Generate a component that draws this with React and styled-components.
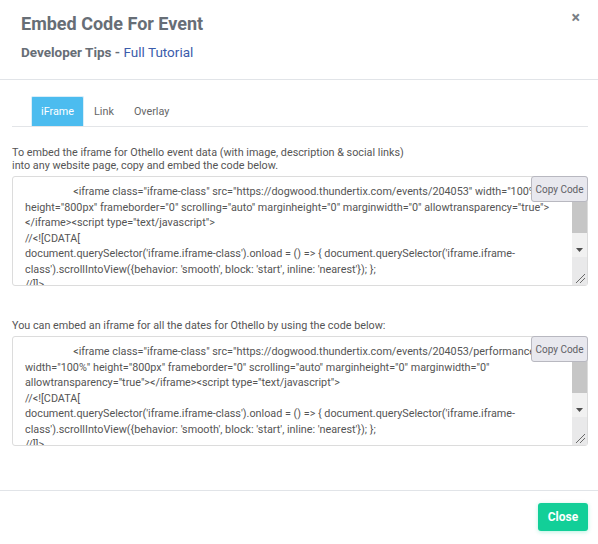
import styled, { createGlobalStyle } from "styled-components";

const GlobalStyle = createGlobalStyle`
  html, body {
    margin: 0;
    padding: 0;
    background: #fff;
  }
  body {
    font-family: Roboto, "Liberation Sans", sans-serif;
  }
`;

const indent = '                  ';

const script = `
//<![CDATA[
document.querySelector('iframe.iframe-class').onload = () => { document.querySelector('iframe.iframe-class').scrollIntoView({behavior: 'smooth', block: 'start', inline: 'nearest'}); };
//]]>
</script>`;

const eventCode = `${indent}<iframe class="iframe-class" src="https://dogwood.thundertix.com/events/204053" width="100%" height="800px" frameborder="0" scrolling="auto" marginheight="0" marginwidth="0" allowtransparency="true"></iframe><script type="text/javascript">${script}`;

const datesCode = `${indent}<iframe class="iframe-class" src="https://dogwood.thundertix.com/events/204053/performances" width="100%" height="800px" frameborder="0" scrolling="auto" marginheight="0" marginwidth="0" allowtransparency="true"></iframe><script type="text/javascript">${script}`;

const tabs = ['iFrame', 'Link', 'Overlay'];

// the page is shot with scrollbars hidden, so the textarea's bar is drawn on top
const FakeScrollbar = () => {
  return (
    <Scrollbar aria-hidden='true'>
      <ScrollButton />
      <Thumb />
      <TrackRest />
      <ScrollButton>
        <svg width='7' height='4' viewBox='0 0 7 4'>
          <path d='M0 0h7L3.5 4z' fill='#505050' />
        </svg>
      </ScrollButton>
      <Corner>
        <svg width='11' height='11' viewBox='0 0 11 11'>
          <path d='M1 10L10 1M5 10L10 5' stroke='#6a6a6a' strokeWidth='1' />
        </svg>
      </Corner>
    </Scrollbar>
  );
}

const CodeBlock = ({ label, code }) => {
  return (
    <Section>
      <Label>{ label }</Label>
      <CodeWrap>
        <CodeArea readOnly defaultValue={ code } />
        <FakeScrollbar />
        <CopyButton>Copy Code</CopyButton>
      </CodeWrap>
    </Section>
  );
}

const App = () => {
  return (
    <>
      <GlobalStyle />
      <Modal>
        <Header>
          <div>
            <Title>Embed Code For Event</Title>
            <Subtitle>
              Developer Tips - <a href="#">Full Tutorial</a>
            </Subtitle>
          </div>
          <CloseX>×</CloseX>
        </Header>

        <Body>
          <TabBar>
            {
              tabs.map((tab, index) => (
                <Tab key={tab} active={ index === 0 }>{ tab }</Tab>
              ))
            }
          </TabBar>

          <CodeBlock
            label={<>To embed the iframe for Othello event data (with image, description &amp; social links)<br />into any website page, copy and embed the code below.</>}
            code={ eventCode }
          />
          <CodeBlock
            label='You can embed an iframe for all the dates for Othello by using the code below:'
            code={ datesCode }
          />
        </Body>

        <Footer>
          <CloseButton>Close</CloseButton>
        </Footer>
      </Modal>
    </>
  );
}

const Modal = styled.div`
  width: 598px;
  height: 544px;
  display: flex;
  flex-direction: column;
  background: #fff;
`;

const Header = styled.div`
  height: 80px;
  box-sizing: border-box;
  padding: 13px 18px 0 21px;
  display: flex;
  justify-content: space-between;
  align-items: flex-start;
  border-bottom: 1px solid #e1e4e8;
`;

const Title = styled.h1`
  margin: 0;
  font-size: 18px;
  font-weight: 700;
  line-height: 22px;
  color: #676e76;
`;

const Subtitle = styled.div`
  margin-top: 8px;
  font-size: 13.5px;
  font-weight: 700;
  line-height: 18px;
  color: #676e76;

  a {
    font-weight: 400;
    color: #3b5cab;
    text-decoration: none;
  }
`;

const CloseX = styled.span`
  margin-top: -1px;
  font-size: 16px;
  font-weight: 700;
  line-height: 12px;
  color: #7a7f86;
  cursor: pointer;
`;

const Body = styled.div`
  flex: 1;
  padding: 16px 10px 0 12px;
`;

const TabBar = styled.div`
  display: flex;
  padding-left: 19px;
  border-bottom: 1px solid #e3e5e8;
  margin-bottom: 19px;
`;

const Tab = styled.div`
  height: 29px;
  padding: 0 9px;
  display: flex;
  align-items: center;
  font-size: 10.8px;
  color: ${ props => props.active ? '#fff' : '#666' };
  background: ${ props => props.active ? '#4cbcef' : 'transparent' };
  border-radius: 2px 2px 0 0;
  border: 1px solid ${ props => props.active ? '#d9eef9' : 'transparent' };
  border-bottom: none;
`;

const Section = styled.div`
  margin-bottom: 33px;
`;

const Label = styled.div`
  font-size: 10.8px;
  line-height: 13px;
  color: #555;
  margin-bottom: 4px;
`;

const CodeWrap = styled.div`
  position: relative;
`;

const CodeArea = styled.textarea`
  display: block;
  width: 100%;
  height: 110px;
  box-sizing: border-box;
  padding: 7px 17px 0 12px;
  border: 1px solid #dcdcdc;
  border-radius: 3px;
  font-family: Roboto, "Liberation Sans", sans-serif;
  font-size: 10.8px;
  line-height: 15.5px;
  color: #555;
  background: #fff;
  outline: none;
  resize: none;
  overflow: hidden;
`;

const Scrollbar = styled.div`
  position: absolute;
  top: 1px;
  right: 1px;
  bottom: 1px;
  width: 15px;
  display: flex;
  flex-direction: column;
  background: #f1f1f1;
  border-radius: 0 2px 2px 0;
  pointer-events: none;
`;

const ScrollButton = styled.div`
  height: 15px;
  flex-shrink: 0;
  display: flex;
  align-items: center;
  justify-content: center;
`;

const Thumb = styled.div`
  height: 41px;
  flex-shrink: 0;
  background: #c6c6c6;
`;

const TrackRest = styled.div`
  flex: 1;
`;

const Corner = styled.div`
  height: 27px;
  flex-shrink: 0;
  display: flex;
  align-items: flex-end;
  justify-content: flex-end;
  background: #e9e9ea;
  padding: 0 1px 1px 0;
`;

const CopyButton = styled.button`
  position: absolute;
  top: 0;
  right: 0;
  width: 57px;
  height: 26px;
  padding: 0;
  background: #e8e8ee;
  border: 1px solid #b8b8c0;
  border-radius: 3px;
  font-family: Roboto, "Liberation Sans", sans-serif;
  font-size: 10px;
  color: #5f5f66;
  cursor: pointer;
`;

const Footer = styled.div`
  height: 54px;
  box-sizing: border-box;
  border-top: 1px solid #e1e4e8;
  display: flex;
  justify-content: flex-end;
  align-items: flex-start;
  padding: 12px 10px 0 0;
`;

const CloseButton = styled.button`
  width: 50px;
  height: 28px;
  border: none;
  border-radius: 3px;
  background: #12cf98;
  color: #fff;
  font-family: Roboto, "Liberation Sans", sans-serif;
  font-size: 12px;
  font-weight: 700;
  box-shadow: 0 1px 4px rgba(18, 207, 152, 0.3);
  cursor: pointer;
`;

export default App;
